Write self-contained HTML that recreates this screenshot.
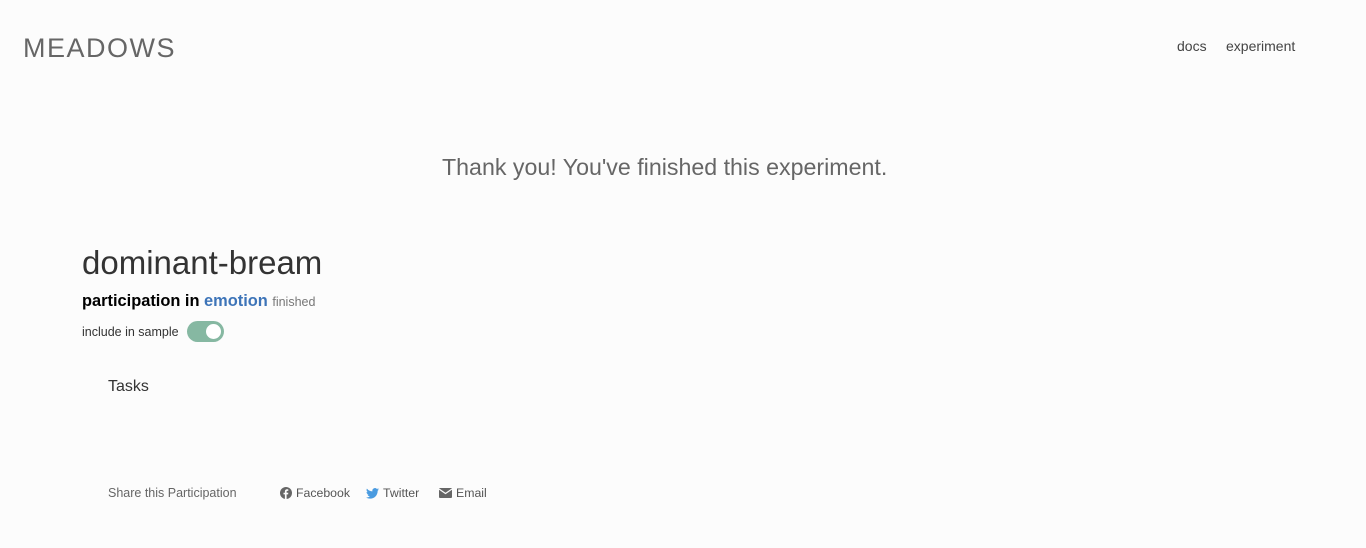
<!DOCTYPE html>
<html><head><style>
body{margin:0;width:1366px;height:548px;background:#fcfcfc;font-family:"Liberation Sans",sans-serif;position:relative;overflow:hidden}
.a{position:absolute;white-space:nowrap}
</style></head><body>
<div class="a" style="left:23px;top:33px;font-size:27px;color:#666;letter-spacing:1.5px">MEADOWS</div>
<div class="a" style="left:1177px;top:38px;font-size:14px;color:#444">docs</div>
<div class="a" style="left:1226px;top:38px;font-size:14px;color:#444">experiment</div>
<div class="a" style="left:442px;top:154px;font-size:23.2px;color:#666">Thank you! You've finished this experiment.</div>
<div class="a" style="left:82px;top:244px;font-size:33px;color:#333">dominant-bream</div>
<div class="a" style="left:82px;top:292px;font-size:16.4px;color:#000;font-weight:bold">participation in <span style="color:#3d74b8">emotion</span> <span style="font-weight:normal;font-size:12.5px;color:#777">finished</span></div>
<div class="a" style="left:82px;top:325px;font-size:12.5px;color:#333">include in sample</div>
<div class="a" style="left:187px;top:321px;width:37px;height:21px;border-radius:11px;background:#86b8a2"><div style="position:absolute;right:3px;top:3px;width:15px;height:15px;border-radius:50%;background:#fff"></div></div>
<div class="a" style="left:108px;top:378px;font-size:16px;color:#333">Tasks</div>
<div class="a" style="left:108px;top:486px;font-size:12.5px;color:#666">Share this Participation</div>
<svg class="a" style="left:280px;top:487px" width="12" height="12" viewBox="0 0 12 12"><circle cx="6" cy="6" r="6" fill="#666"/><path d="M6.6 12V7.4h1.5l.2-1.7H6.6v-1c0-.5.2-.8.8-.8h.9V2.4c-.3 0-.8-.1-1.3-.1-1.3 0-2.1.8-2.1 2.2v1.2H3.5v1.7h1.4V12z" fill="#fcfcfc"/></svg>
<div class="a" style="left:296px;top:486px;font-size:12.3px;color:#555">Facebook</div>
<svg class="a" style="left:366px;top:488px" width="13" height="11" viewBox="0 0 24 20"><path d="M24 2.4a10 10 0 0 1-2.8.8A5 5 0 0 0 23.3.4a10 10 0 0 1-3.1 1.2A4.9 4.9 0 0 0 11.8 6 14 14 0 0 1 1.7.9a4.9 4.9 0 0 0 1.5 6.6A5 5 0 0 1 1 6.9a4.9 4.9 0 0 0 3.9 4.8 5 5 0 0 1-2.2.1 4.9 4.9 0 0 0 4.6 3.4A9.9 9.9 0 0 1 0 17.3 14 14 0 0 0 7.5 19.5c9 0 14-7.5 14-14v-.6A10 10 0 0 0 24 2.4z" fill="#4a9be0"/></svg>
<div class="a" style="left:383px;top:486px;font-size:12.3px;color:#555">Twitter</div>
<svg class="a" style="left:439px;top:488px" width="13" height="10" viewBox="0 0 13 10"><rect width="13" height="10" rx="1" fill="#666"/><path d="M0 1l6.5 4.5L13 1" stroke="#fcfcfc" stroke-width="1.2" fill="none"/></svg>
<div class="a" style="left:456px;top:486px;font-size:12.3px;color:#555">Email</div>
</body></html>
